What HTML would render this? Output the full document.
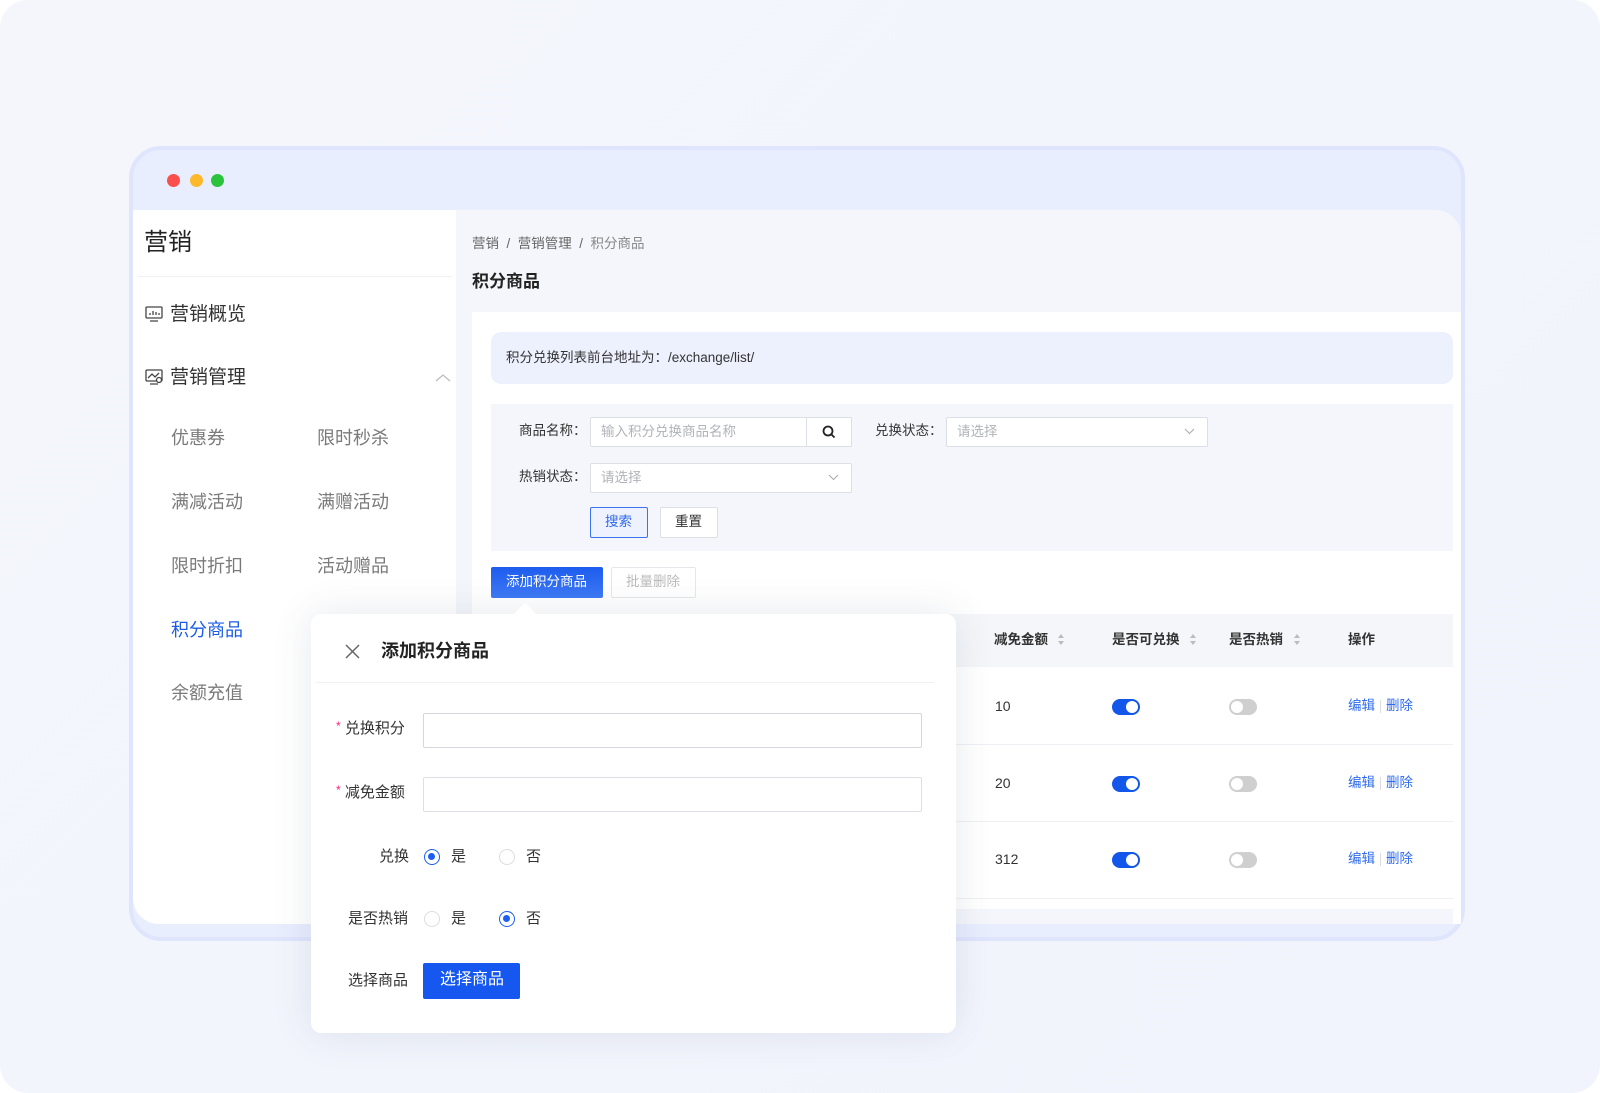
<!DOCTYPE html>
<html><head><meta charset="utf-8"><style>
*{margin:0;padding:0;box-sizing:border-box}
body{width:1600px;height:1093px;background:#fff;font-family:"Liberation Sans","Noto Sans CJK SC",sans-serif;position:relative;overflow:hidden;color:#222}
.a{position:absolute}
.bg{left:0;top:0;width:1600px;height:1093px;border-radius:28px;background:linear-gradient(135deg,#f4f6fb,#f1f4fd)}
.win{left:129px;top:146px;width:1336px;height:795px;border-radius:32px;background:#e8eefe;border:4px solid #dfe5fc}
.dot{width:13px;height:13px;border-radius:50%;top:174px}
.inner{left:133px;top:210px;width:1328px;height:714px;background:#fff;border-radius:0 26px 26px 26px;overflow:hidden}
.main{left:456px;top:210px;width:1005px;height:714px;background:#f4f6fb;border-radius:0 26px 0 0}
.t{white-space:nowrap;line-height:1}
.side{font-size:19px;color:#333}
.sub{font-size:18px;color:#7a7a7a}
.lbl{font-size:13.5px;color:#333}
.inp{background:#fff;border:1px solid #dcdfe6;border-radius:2px}
.ph{font-size:13.5px;color:#b0b3b8}
.th{font-size:13.5px;font-weight:bold;color:#333}
.td{font-size:14px;color:#333}
.ton{width:28px;height:16px;border-radius:8px;background:#1356ea}
.ton::after{content:"";position:absolute;right:2px;top:2px;width:12px;height:12px;border-radius:50%;background:#fff}
.toff{width:28px;height:16px;border-radius:8px;background:#cfcfcf}
.toff::after{content:"";position:absolute;left:2px;top:2px;width:12px;height:12px;border-radius:50%;background:#fff}
.lk{font-size:13.5px;color:#2f6bef}
.sort{width:6px;height:11px}
.radio{width:16px;height:16px;border-radius:50%;border:1px solid #ddd;background:#fff}
.radio.on{border:1.5px solid #1c5ff0}
.radio.on::after{content:"";position:absolute;left:3px;top:3px;width:7px;height:7px;border-radius:50%;background:#1c5ff0}
.ml{font-size:15px;color:#333}
</style></head><body>
<div class="a bg"></div>
<div class="a win"></div>
<div class="a dot" style="left:167px;background:#fb4f4d"></div>
<div class="a dot" style="left:190px;background:#fdb82b"></div>
<div class="a dot" style="left:211px;background:#2ac43c"></div>
<div class="a inner"></div>
<div class="a main"></div>

<!-- sidebar -->
<div class="a t" style="left:144px;top:231px;font-size:24px;color:#222">营销</div>
<div class="a" style="left:138px;top:276px;width:314px;height:1px;background:#f0f1f4"></div>
<svg class="a" style="left:145px;top:305px" width="18" height="18" viewBox="0 0 18 18" fill="none" stroke="#444" stroke-width="1.3"><rect x="1" y="2" width="16" height="11" rx="1"/><path d="M5 16h8M5 10V8M8 10V6M11 10V7M14 10V8"/></svg>
<div class="a t side" style="left:170px;top:305px">营销概览</div>
<svg class="a" style="left:145px;top:368px" width="18" height="18" viewBox="0 0 18 18" fill="none" stroke="#444" stroke-width="1.3"><rect x="1" y="2" width="16" height="11" rx="1"/><path d="M5 16h8M3 10l4-4 3 3 4-4"/><circle cx="14" cy="12" r="2.5" fill="#fff"/></svg>
<div class="a t side" style="left:170px;top:368px">营销管理</div>
<svg class="a" style="left:435px;top:373px" width="16" height="10" viewBox="0 0 16 10" fill="none" stroke="#bbb" stroke-width="1.2"><path d="M1 8l7-6 7 6"/></svg>
<div class="a t sub" style="left:171px;top:429px">优惠券</div>
<div class="a t sub" style="left:317px;top:429px">限时秒杀</div>
<div class="a t sub" style="left:171px;top:493px">满减活动</div>
<div class="a t sub" style="left:317px;top:493px">满赠活动</div>
<div class="a t sub" style="left:171px;top:557px">限时折扣</div>
<div class="a t sub" style="left:317px;top:557px">活动赠品</div>
<div class="a t sub" style="left:171px;top:621px;color:#1a5ce6">积分商品</div>
<div class="a t sub" style="left:171px;top:684px">余额充值</div>

<!-- main -->
<div class="a t" style="left:472px;top:237px;font-size:13.5px;color:#666">营销 &nbsp;/&nbsp; 营销管理 &nbsp;/&nbsp; <span style="color:#888">积分商品</span></div>
<div class="a t" style="left:472px;top:273px;font-size:17px;font-weight:bold;color:#222">积分商品</div>
<div class="a" style="left:472px;top:312px;width:989px;height:612px;background:#fff"></div>
<div class="a" style="left:491px;top:332px;width:962px;height:52px;background:#edf1fe;border-radius:10px"></div>
<div class="a t" style="left:506px;top:351px;font-size:13.5px;color:#333">积分兑换列表前台地址为：/exchange/list/</div>
<div class="a" style="left:491px;top:404px;width:962px;height:147px;background:#f4f6fb"></div>
<div class="a t lbl" style="left:519px;top:424px">商品名称：</div>
<div class="a inp" style="left:590px;top:417px;width:262px;height:30px"></div>
<div class="a" style="left:806px;top:417px;width:1px;height:30px;background:#dcdfe6"></div>
<svg class="a" style="left:822px;top:425px" width="14" height="14" viewBox="0 0 14 14" fill="none" stroke="#222" stroke-width="1.8"><circle cx="6" cy="6" r="4.5"/><path d="M9.5 9.5l3 3"/></svg>
<div class="a t ph" style="left:601px;top:425px">输入积分兑换商品名称</div>
<div class="a t lbl" style="left:875px;top:424px">兑换状态：</div>
<div class="a inp" style="left:946px;top:417px;width:262px;height:30px"></div>
<div class="a t ph" style="left:957px;top:425px">请选择</div>
<svg class="a" style="left:1184px;top:428px" width="11" height="7" viewBox="0 0 11 7" fill="none" stroke="#aaa"><path d="M1 1l4.5 4.5L10 1"/></svg>
<div class="a t lbl" style="left:519px;top:470px">热销状态：</div>
<div class="a inp" style="left:590px;top:463px;width:262px;height:30px"></div>
<div class="a t ph" style="left:601px;top:471px">请选择</div>
<svg class="a" style="left:828px;top:474px" width="11" height="7" viewBox="0 0 11 7" fill="none" stroke="#aaa"><path d="M1 1l4.5 4.5L10 1"/></svg>
<div class="a" style="left:590px;top:507px;width:58px;height:31px;background:#eef2fe;border:1px solid #3b73ee;border-radius:2px"></div>
<div class="a t" style="left:605px;top:515px;font-size:13.5px;color:#2e68ec">搜索</div>
<div class="a" style="left:660px;top:507px;width:58px;height:31px;background:#fff;border:1px solid #dcdfe6;border-radius:2px"></div>
<div class="a t" style="left:675px;top:515px;font-size:13.5px;color:#333">重置</div>
<div class="a" style="left:491px;top:567px;width:112px;height:31px;background:linear-gradient(#1d5cee,#3f7af5);border-radius:2px"></div>
<div class="a t" style="left:506px;top:575px;font-size:13.5px;color:#fff">添加积分商品</div>
<div class="a" style="left:611px;top:567px;width:85px;height:31px;background:#fff;border:1px solid #e5e7eb;border-radius:2px"></div>
<div class="a t" style="left:626px;top:575px;font-size:13.5px;color:#bbb">批量删除</div>

<!-- table -->
<div class="a" style="left:491px;top:614px;width:962px;height:53px;background:#f4f6f9"></div>
<div class="a t th" style="left:994px;top:633px">减免金额</div>
<div class="a t th" style="left:1112px;top:633px">是否可兑换</div>
<div class="a t th" style="left:1229px;top:633px">是否热销</div>
<div class="a t th" style="left:1348px;top:633px">操作</div>
<svg class="a sort" style="left:1058px;top:634px" viewBox="0 0 6 11" fill="#bbb"><path d="M0 4l3-4 3 4zM0 7l3 4 3-4z"/></svg>
<svg class="a sort" style="left:1190px;top:634px" viewBox="0 0 6 11" fill="#bbb"><path d="M0 4l3-4 3 4zM0 7l3 4 3-4z"/></svg>
<svg class="a sort" style="left:1294px;top:634px" viewBox="0 0 6 11" fill="#bbb"><path d="M0 4l3-4 3 4zM0 7l3 4 3-4z"/></svg>
<div class="a" style="left:491px;top:744px;width:962px;height:1px;background:#eef0f4"></div>
<div class="a" style="left:491px;top:821px;width:962px;height:1px;background:#eef0f4"></div>
<div class="a" style="left:491px;top:898px;width:962px;height:1px;background:#eef0f4"></div>
<div class="a" style="left:491px;top:909px;width:962px;height:15px;background:#f4f6fb"></div>

<div class="a t td" style="left:995px;top:699px">10</div>
<div class="a ton" style="left:1112px;top:699px"></div><div class="a toff" style="left:1229px;top:699px"></div>
<div class="a t lk" style="left:1348px;top:699px">编辑 <span style="color:#ddd">|</span> 删除</div>
<div class="a t td" style="left:995px;top:776px">20</div>
<div class="a ton" style="left:1112px;top:776px"></div><div class="a toff" style="left:1229px;top:776px"></div>
<div class="a t lk" style="left:1348px;top:776px">编辑 <span style="color:#ddd">|</span> 删除</div>
<div class="a t td" style="left:995px;top:852px">312</div>
<div class="a ton" style="left:1112px;top:852px"></div><div class="a toff" style="left:1229px;top:852px"></div>
<div class="a t lk" style="left:1348px;top:852px">编辑 <span style="color:#ddd">|</span> 删除</div>

<!-- modal -->
<div class="a" style="left:311px;top:614px;width:645px;height:419px;background:#fff;border-radius:10px;box-shadow:0 0 40px rgba(60,70,110,0.12)"></div>
<div class="a" style="left:517px;top:606px;width:16px;height:16px;background:#fff;transform:rotate(45deg)"></div>
<svg class="a" style="left:345px;top:644px" width="15" height="15" viewBox="0 0 15 15" stroke="#666" stroke-width="1.5"><path d="M1 1l13 13M14 1L1 14"/></svg>
<div class="a t" style="left:381px;top:642px;font-size:18px;font-weight:bold;color:#222">添加积分商品</div>
<div class="a" style="left:316px;top:682px;width:618px;height:1px;background:#f0f1f4"></div>
<div class="a t ml" style="left:336px;top:720px"><span style="color:#f27;font-size:12px;vertical-align:3px">*</span> 兑换积分</div>
<div class="a" style="left:423px;top:713px;width:499px;height:35px;border:1.5px solid #d4d7dd;border-radius:2px"></div>
<div class="a t ml" style="left:336px;top:784px"><span style="color:#f27;font-size:12px;vertical-align:3px">*</span> 减免金额</div>
<div class="a" style="left:423px;top:777px;width:499px;height:35px;border:1px solid #dcdfe6;border-radius:2px"></div>
<div class="a t ml" style="left:379px;top:849px">兑换</div>
<div class="a radio on" style="left:424px;top:849px"></div>
<div class="a t ml" style="left:451px;top:849px">是</div>
<div class="a radio" style="left:499px;top:849px"></div>
<div class="a t ml" style="left:526px;top:849px">否</div>
<div class="a t ml" style="left:348px;top:911px">是否热销</div>
<div class="a radio" style="left:424px;top:911px"></div>
<div class="a t ml" style="left:451px;top:911px">是</div>
<div class="a radio on" style="left:499px;top:911px"></div>
<div class="a t ml" style="left:526px;top:911px">否</div>
<div class="a t ml" style="left:348px;top:973px">选择商品</div>
<div class="a" style="left:423px;top:963px;width:97px;height:36px;background:#1557ef;border-radius:2px"></div>
<div class="a t" style="left:440px;top:972px;font-size:16px;color:#fff">选择商品</div>
</body></html>
